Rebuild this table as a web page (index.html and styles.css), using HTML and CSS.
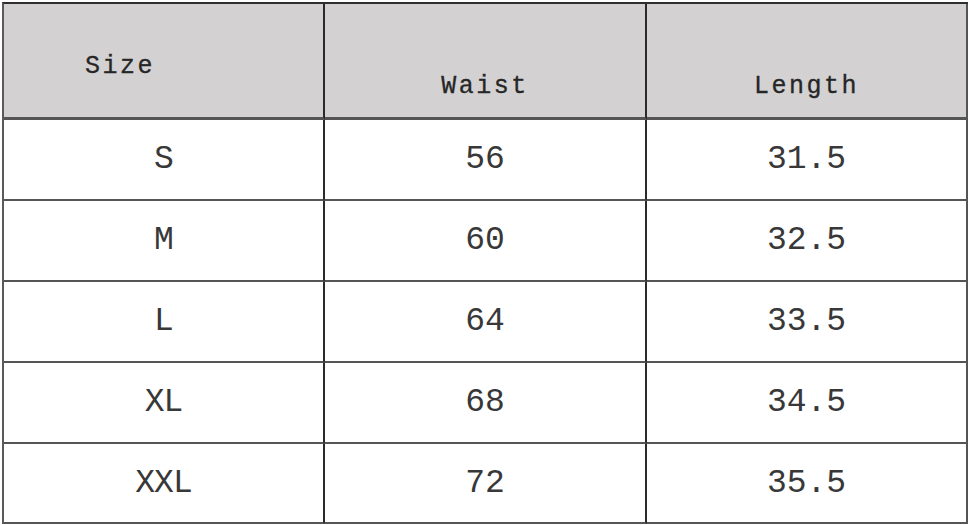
FILE: index.html
```html
<!DOCTYPE html>
<html>
<head>
<meta charset="utf-8">
<link rel="stylesheet" href="styles.css">
</head>
<body>
<div class="sheet">
  <div class="cell head size">Size</div>
  <div class="cell head low">Waist</div>
  <div class="cell head low last">Length</div>

  <div class="cell">S</div>
  <div class="cell num">56</div>
  <div class="cell num last">31.5</div>

  <div class="cell">M</div>
  <div class="cell num">60</div>
  <div class="cell num last">32.5</div>

  <div class="cell">L</div>
  <div class="cell num">64</div>
  <div class="cell num last">33.5</div>

  <div class="cell">XL</div>
  <div class="cell num">68</div>
  <div class="cell num last">34.5</div>

  <div class="cell">XXL</div>
  <div class="cell num">72</div>
  <div class="cell num last">35.5</div>
</div>
</body>
</html>
```
FILE: styles.css
```css
html, body {
  margin: 0;
  padding: 0;
  background: #ffffff;
}

.sheet {
  margin: 2px 0 0 2px;
  width: 966px;
  box-sizing: border-box;
  display: grid;
  grid-template-columns: 321px 322px 321px;
  grid-template-rows: 116px 81px 81px 81px 81px 80px;
  border-top: 2px solid #2e2e2e;
  border-left: 2px solid #5a5a5a;
  font-family: "Liberation Mono", "DejaVu Sans Mono", monospace;
  color: #383838;
}

.cell {
  display: flex;
  align-items: center;
  justify-content: center;
  border-right: 2px solid #2a2a2a;
  border-bottom: 2px solid #555555;
  font-size: 33px;
  letter-spacing: -1px;
  background: #ffffff;
}

.cell.last {
  border-right-color: #555555;
}

.head {
  background: #d3d1d2;
  border-bottom: 3px solid #555555;
  font-size: 25px;
  letter-spacing: 2.5px;
  color: #262626;
  -webkit-text-stroke: 0.3px #262626;
}

.head.size {
  justify-content: flex-start;
  padding-left: 81px;
  padding-top: 12px;
}

.head.low {
  align-items: flex-end;
  padding-bottom: 16px;
}

.num {
  letter-spacing: 0;
}
```
